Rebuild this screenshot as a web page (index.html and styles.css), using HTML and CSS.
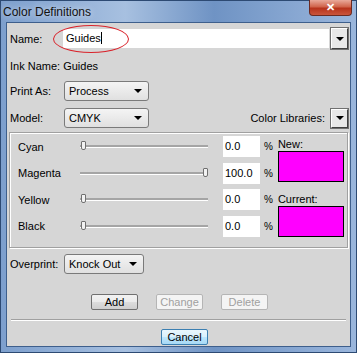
FILE: index.html
```html
<!DOCTYPE html>
<html lang="en">
<head>
  <meta charset="UTF-8" />
  <title>Color Definitions</title>
  <link rel="stylesheet" href="styles.css">
</head>
<body>
  <div class="window">
    <div class="titlebar">
      <span class="title">Color Definitions</span>
      <div class="close">&#x2715;</div>
    </div>
    <div class="client">
      <div class="row name-row">
        <label class="lbl">Name:</label>
        <div class="combo">
          <div class="combo-text">Guides<span class="caret"></span></div>
          <div class="dd-btn"><span class="tri"></span></div>
        </div>
        <div class="ellipse"></div>
      </div>
      <div class="row ink-row">Ink Name: Guides</div>
      <div class="row sel-row">
        <label class="lbl">Print As:</label>
        <div class="select">Process<span class="tri"></span></div>
      </div>
      <div class="row sel-row model-row">
        <label class="lbl">Model:</label>
        <div class="select">CMYK<span class="tri"></span></div>
        <div class="libs">Color Libraries:</div>
        <div class="dd-btn lib-btn"><span class="tri"></span></div>
      </div>

      <div class="group">
        <div class="channels">
          <div class="chan">
            <span class="chan-name">Cyan</span>
            <div class="slider"><span class="thumb"></span></div>
            <div class="num">0.0</div><span class="pct">%</span>
          </div>
          <div class="chan">
            <span class="chan-name">Magenta</span>
            <div class="slider"><span class="thumb max"></span></div>
            <div class="num">100.0</div><span class="pct">%</span>
          </div>
          <div class="chan">
            <span class="chan-name">Yellow</span>
            <div class="slider"><span class="thumb"></span></div>
            <div class="num">0.0</div><span class="pct">%</span>
          </div>
          <div class="chan">
            <span class="chan-name">Black</span>
            <div class="slider"><span class="thumb"></span></div>
            <div class="num">0.0</div><span class="pct">%</span>
          </div>
        </div>
        <div class="swatches">
          <div class="sw-label">New:</div>
          <div class="swatch"></div>
          <div class="sw-label">Current:</div>
          <div class="swatch"></div>
        </div>
      </div>

      <div class="row sel-row over-row">
        <label class="lbl">Overprint:</label>
        <div class="select short">Knock Out<span class="tri"></span></div>
      </div>

      <div class="buttons">
        <button class="btn">Add</button>
        <button class="btn disabled">Change</button>
        <button class="btn disabled">Delete</button>
      </div>
      <div class="sep"></div>
      <div class="bottom">
        <button class="btn focus">Cancel</button>
      </div>
    </div>
  </div>
</body>
</html>
```

FILE: styles.css
```css
body {
  margin: 0;
  font-family: "Liberation Sans", Arial, sans-serif;
  font-size: 11px;
  color: #000;
  background: #fff;
}
.window {
  width: 357px;
  height: 353px;
  box-sizing: border-box;
  display: flex;
  flex-direction: column;
  background: linear-gradient(90deg, #7d9fcd 0%, #a7c0e0 35%, #6f93c4 60%, #9ab6dc 100%);
  border: 1px solid #2d4a73;
  padding: 0 5px 5px 5px;
}
.titlebar {
  height: 21px;
  display: flex;
  align-items: flex-start;
  justify-content: space-between;
  margin: 0 -5px;
  padding: 0 4px 0 2px;
}
.title {
  font-size: 12px;
  margin-top: 4px;
  color: #111;
  text-shadow: 0 0 6px rgba(255, 255, 255, 0.8);
}
.close {
  width: 43px;
  height: 16px;
  margin-top: -1px;
  background: linear-gradient(180deg, #e9a99a 0%, #d0644c 45%, #b7331c 55%, #c9553c 100%);
  border: 1px solid #6b2a22;
  border-top: none;
  border-radius: 0 0 4px 4px;
  color: #fff;
  font-size: 11px;
  font-weight: bold;
  text-align: center;
  line-height: 15px;
  box-sizing: border-box;
}
.client {
  flex: 1;
  background: #d6d6d6;
  border: 1px solid #3e5f8c;
  padding: 0 2px;
  display: flex;
  flex-direction: column;
}
.row {
  display: flex;
  align-items: center;
  position: relative;
}
.lbl {
  width: 53px;
  flex: none;
  padding-left: 1px;
}
.name-row {
  margin-top: 5px;
  height: 21px;
}
.combo {
  flex: 1;
  display: flex;
  align-items: stretch;
  height: 21px;
}
.combo-text {
  flex: 1;
  background: #fff;
  margin: 1px 2px 1px 0;
  padding: 3px 0 0 3px;
  box-sizing: border-box;
}
.caret {
  display: inline-block;
  width: 1px;
  height: 12px;
  background: #000;
  vertical-align: -2px;
}
.dd-btn {
  width: 17px;
  height: 21px;
  box-sizing: border-box;
  background: #e8e8e8;
  border: 1px solid;
  border-color: #fff #404040 #404040 #fff;
  box-shadow: 0 0 0 1px #707070;
  display: flex;
  align-items: center;
  justify-content: center;
}
.tri {
  width: 0;
  height: 0;
  border-left: 4px solid transparent;
  border-right: 4px solid transparent;
  border-top: 4px solid #000;
}
.ellipse {
  position: absolute;
  left: 44px;
  top: -3px;
  width: 74px;
  height: 26px;
  border: 1px solid #d9232b;
  border-radius: 50%;
  pointer-events: none;
}
.ink-row {
  margin-top: 10px;
  height: 14px;
  padding-left: 1px;
}
.sel-row {
  height: 20px;
  margin-top: 8px;
}
.model-row {
  margin-top: 7px;
}
.select {
  width: 85px;
  height: 20px;
  box-sizing: border-box;
  border: 1px solid #7a7a7a;
  border-radius: 3px;
  background: linear-gradient(180deg, #f4f4f4, #e0e0e0);
  display: flex;
  align-items: center;
  justify-content: space-between;
  padding: 0 6px 0 4px;
  margin-left: 1px;
}
.select.short {
  width: 80px;
}
.libs {
  margin-left: auto;
  margin-right: 6px;
}
.lib-btn {
  height: 19px;
}
.group {
  margin-top: 4px;
  height: 116px;
  box-sizing: border-box;
  border: 1px solid #a0a0a0;
  box-shadow: inset 1px 1px 0 #fff, 1px 1px 0 #fff;
  display: flex;
  padding: 3px 6px 0 8px;
}
.channels {
  display: flex;
  flex-direction: column;
  gap: 5.5px;
  width: 262px;
}
.chan {
  display: flex;
  align-items: center;
  height: 21px;
}
.chan-name {
  width: 62px;
}
.slider {
  width: 128px;
  height: 2px;
  background: #a5a5a5;
  border-bottom: 1px solid #fff;
  position: relative;
  margin-right: 15px;
}
.thumb {
  position: absolute;
  left: 1px;
  top: -4px;
  width: 3px;
  height: 7px;
  background: #f2f2f2;
  border: 1px solid #707070;
  border-radius: 1px 1px 2px 2px;
}
.thumb.max {
  left: auto;
  right: 0;
}
.num {
  width: 37px;
  height: 21px;
  background: #fff;
  box-sizing: border-box;
  padding: 4px 0 0 2px;
}
.pct {
  margin-left: 4px;
  font-size: 10px;
}
.swatches {
  display: flex;
  flex-direction: column;
  margin-left: 5px;
  padding-top: 1px;
}
.sw-label {
  height: 16px;
  line-height: 14px;
}
.swatch {
  width: 66px;
  height: 36px;
  box-sizing: border-box;
  background: #ff00ff;
  border: 1px solid #000;
  margin-bottom: 10px;
}
.over-row {
  margin-top: 6px;
}
.buttons {
  display: flex;
  justify-content: center;
  gap: 18px;
  margin-top: 20px;
  padding-left: 2px;
}
.btn {
  font-family: "Liberation Sans", Arial, sans-serif;
  font-size: 11px;
  width: 47px;
  height: 16px;
  padding: 0;
  border: 1px solid #707070;
  border-radius: 2px;
  background: linear-gradient(180deg, #f2f2f2 0%, #ebebeb 50%, #dddddd 51%, #cfcfcf 100%);
  color: #000;
}
.btn.disabled {
  color: #a0a0a0;
  border-color: #b5b5b5;
  background: #f4f4f4;
}
.btn.focus {
  border-color: #3c7fb1;
  background: linear-gradient(180deg, #eaf6fd 0%, #d9f0fc 50%, #bee6fd 51%, #a7d9f5 100%);
}
.sep {
  margin: 9px 2px 0 2px;
  height: 1px;
  background: #a0a0a0;
  border-bottom: 1px solid #fff;
}
.bottom {
  display: flex;
  justify-content: center;
  margin-top: 8px;
  padding-left: 12px;
}
```
